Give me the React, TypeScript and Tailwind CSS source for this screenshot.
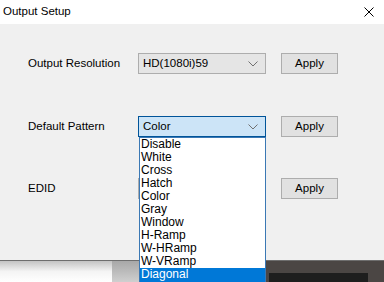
import React from "react";

const font = { fontFamily: '"Liberation Sans", Arial, sans-serif' };

function Chevron() {
  return (
    <svg width="10" height="6" viewBox="0 0 10 6" className="shrink-0">
      <path d="M0.5 0.5 L5 5 L9.5 0.5" fill="none" stroke="#707070" strokeWidth="1" />
    </svg>
  );
}

function Combo({ value, focused }: { value: string; focused?: boolean }) {
  return (
    <div
      className={
        "w-[128px] h-[21px] flex items-center justify-between pl-[4px] pr-[7px] border " +
        (focused ? "bg-[#cce4f7] border-[#005499]" : "bg-[#e5e5e5] border-[#adadad]")
      }
    >
      <span className="text-[11.5px] text-black leading-none">{value}</span>
      <Chevron />
    </div>
  );
}

function ApplyBtn() {
  return (
    <div className="w-[57px] h-[21px] flex items-center justify-center bg-[#e1e1e1] border border-[#adadad] text-[11.5px] text-black">
      Apply
    </div>
  );
}

const items = [
  "Disable",
  "White",
  "Cross",
  "Hatch",
  "Color",
  "Gray",
  "Window",
  "H-Ramp",
  "W-HRamp",
  "W-VRamp",
  "Diagonal",
];

export default function App() {
  return (
    <div className="relative w-[384px] h-[282px] overflow-hidden bg-white" style={font}>
      <div className="flex flex-col w-[384px]">
        <div className="h-[24px] bg-white flex items-center justify-between pl-[3px] pr-[10px]">
          <span className="text-[11.5px] text-black">Output Setup</span>
          <svg width="10" height="10" viewBox="0 0 10 10">
            <path d="M0.5 0.5 L9.5 9.5 M9.5 0.5 L0.5 9.5" stroke="#000" strokeWidth="1" />
          </svg>
        </div>
        <div className="h-[237px] bg-[#f0f0f0] border-b border-[#6e6e6e] pt-[29px] pl-[28px] flex flex-col gap-[42px]">
          <div className="flex items-center h-[21px]">
            <span className="w-[110px] text-[11.5px] text-black">Output Resolution</span>
            <Combo value="HD(1080i)59" />
            <div className="w-[15px]" />
            <ApplyBtn />
          </div>
          <div className="flex items-center h-[21px]">
            <span className="w-[110px] text-[11.5px] text-black">Default Pattern</span>
            <Combo value="Color" focused />
            <div className="w-[15px]" />
            <ApplyBtn />
          </div>
          <div className="flex items-center h-[21px] -mt-[1px]">
            <span className="w-[110px] text-[11.5px] text-black">EDID</span>
            <Combo value="" />
            <div className="w-[15px]" />
            <ApplyBtn />
          </div>
        </div>
        <div className="flex h-[21px]">
          <div className="w-[112px] bg-gradient-to-b from-[#c4c4c4] via-[#f4f4f4] to-white" />
          <div className="w-[153px] bg-gradient-to-b from-[#a8a8a8] to-[#cfcfcf]" />
          <div className="flex-1 bg-[#4b4644] pl-[4px] pt-[12px]">
            <div className="w-[99px] h-full bg-[#1e1e1e]" />
          </div>
        </div>
      </div>
      <div className="absolute left-[139px] top-[137px] w-[127px] bg-white border border-[#3b78b4] border-b-0 flex flex-col">
        {items.map((it) => (
          <div
            key={it}
            className={
              "h-[13px] pl-[1px] text-[12px] leading-[13px] " +
              (it === "Diagonal" ? "bg-[#0078d7] text-white" : "text-black")
            }
          >
            {it}
          </div>
        ))}
        <div className="h-[6px] bg-[#0078d7]" />
      </div>
    </div>
  );
}
